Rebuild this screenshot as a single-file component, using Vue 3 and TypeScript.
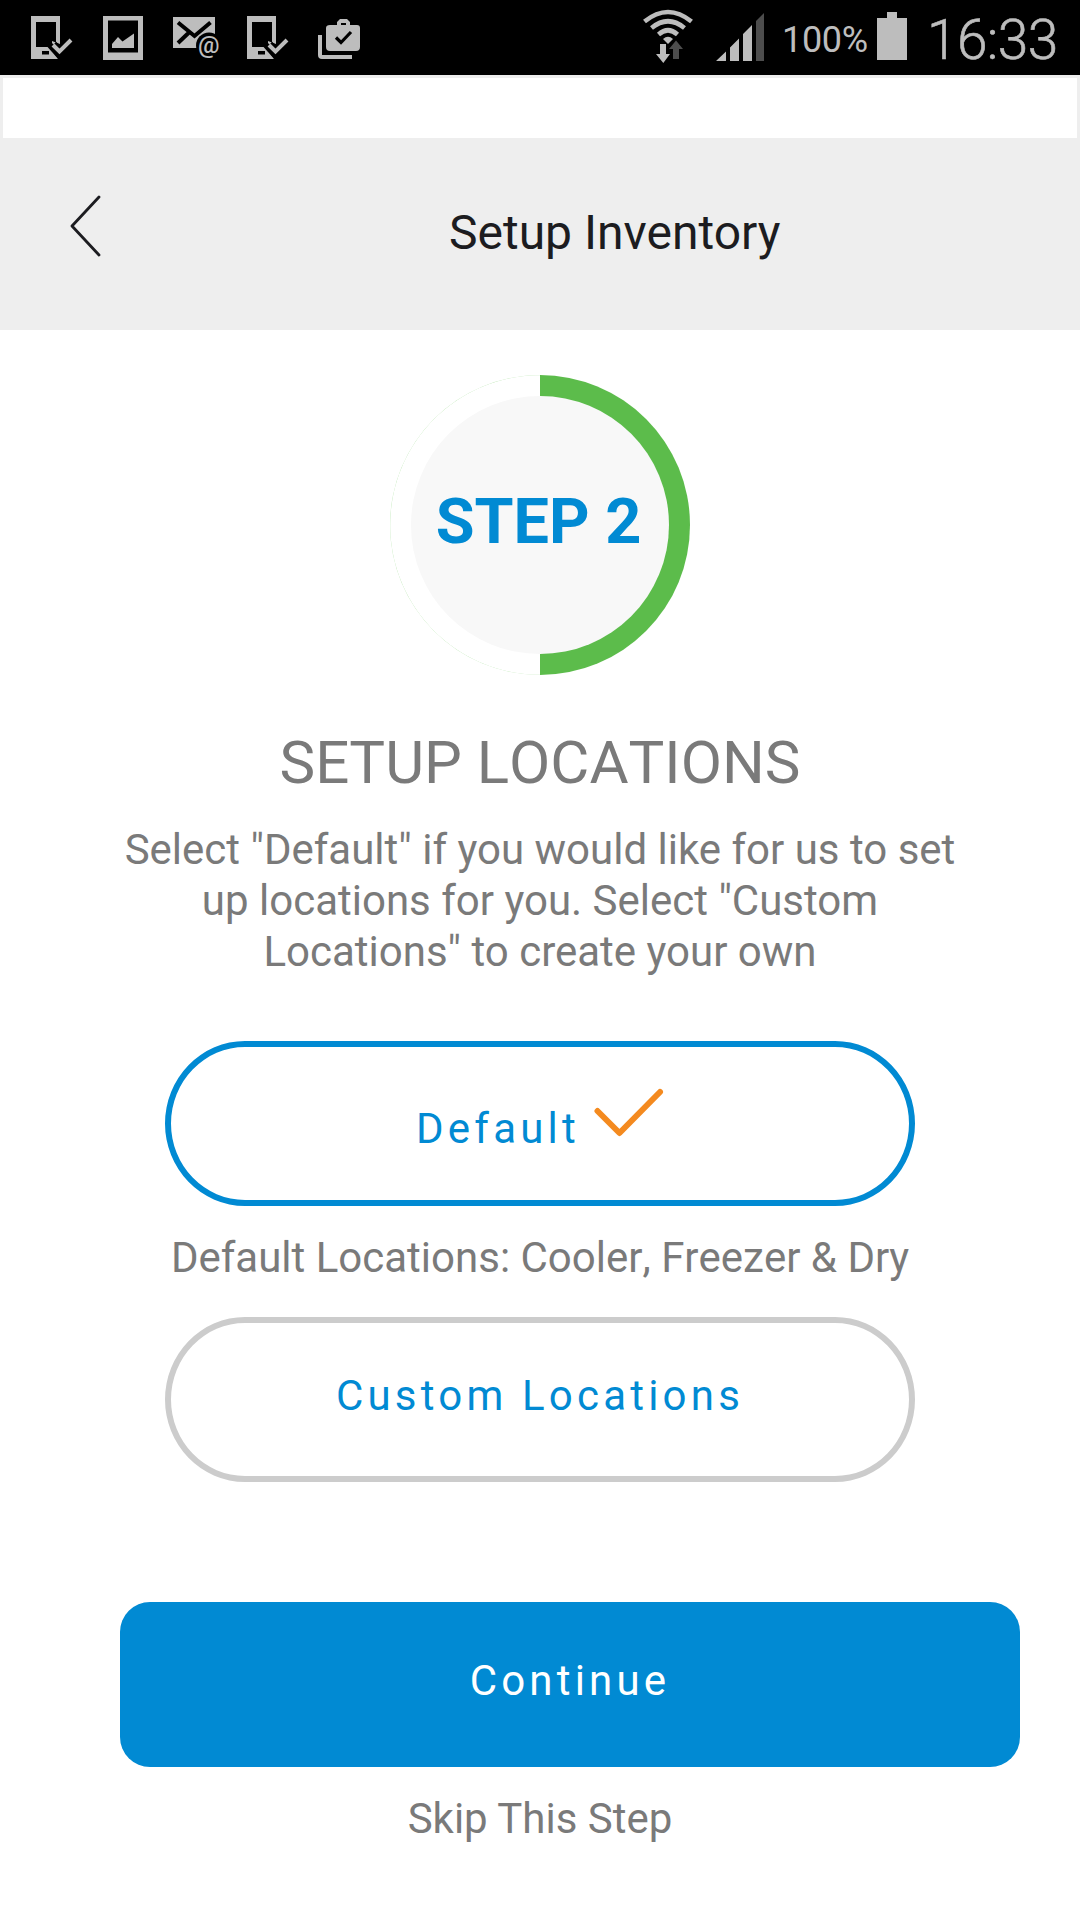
<script setup lang="ts">
interface Icon {
  name: 'device' | 'image' | 'mail' | 'work'
  width: number
}

const notifications: Icon[] = [
  { name: 'device', width: 44 },
  { name: 'image', width: 40 },
  { name: 'mail', width: 48 },
  { name: 'device', width: 44 },
  { name: 'work', width: 44 },
]
</script>

<template>
  <div class="screen">
    <div class="status">
      <div class="notifications">
        <svg
          v-for="(icon, i) in notifications"
          :key="i"
          :width="icon.width"
          height="75"
          :viewBox="`0 0 ${icon.width} 75`"
          fill="#bdbdbd"
        >
          <template v-if="icon.name === 'device'">
            <path fill-rule="evenodd" d="M0 16H29V44L21 41V47H19L27 59H0ZM5 22V47H25V22ZM11 51V54.5H18V51Z" />
            <path d="M17 43L29 56.500" fill="none" stroke="#000" stroke-width="6" />
            <path d="M22 45L28.500 51.500L40 40" fill="none" stroke="#000" stroke-width="9" />
            <path d="M22 45L28.500 51.500L40 40" fill="none" stroke="#bdbdbd" stroke-width="4" />
          </template>
          <template v-else-if="icon.name === 'image'">
            <path fill-rule="evenodd" d="M0 16H40V60H0ZM5 20.500V52.500H35V20.500Z" />
            <path d="M9 48V44L15 37L19.500 41.500L31 33.500V48Z" />
          </template>
          <template v-else-if="icon.name === 'mail'">
            <path d="M0 17H42V48H0Z" />
            <path d="M5 22.500L21.500 36L37.500 22.500M5 43L16 32.500" fill="none" stroke="#000" stroke-width="4" />
            <circle cx="36" cy="45.500" r="13" fill="#000" />
            <text x="25" y="53" class="at" textLength="21.500" lengthAdjust="spacingAndGlyphs">@</text>
          </template>
          <template v-else>
            <path d="M0 35H4V55H34V59H4Q0 59 0 55Z" />
            <path
              fill-rule="evenodd"
              d="M12 25H19V22L22 19H29L32 22V25H39Q42 25 42 28V47Q42 51 38 51H12Q8 51 8 47V28Q8 25 12 25ZM23 23V25H28V23Z"
            />
            <path d="M18 37.500L23 42.500L33 32" fill="none" stroke="#000" stroke-width="3.200" />
          </template>
        </svg>
      </div>
      <div class="system">
        <svg class="wifi" width="50" height="75" viewBox="643 0 50 75" fill="none" stroke="#bdbdbd" stroke-width="4.600">
          <path d="M644.500 21.500Q668 2.500 691.500 21.500M651.500 28Q668 14.500 684.500 28M658.500 34.500Q668 26 677.500 34.500" />
          <path d="M663 39Q668 34.500 673 39L668 44Z" fill="#bdbdbd" stroke="none" />
          <path d="M660 44H666V54H670L663.300 63L656 54H660Z" fill="#bdbdbd" stroke="none" />
          <path d="M673 59V49H669L676 40.500L683 49H679V59Z" fill="#4d4d4d" stroke="none" />
        </svg>
        <svg class="signal" width="48" height="75" viewBox="716 0 48 75" fill="#bdbdbd">
          <path d="M716 61L726 51.500V61ZM730 61V47.500L739 38.500V61ZM743 61V34L752 25V61Z" />
          <path d="M756 61V21L764 13V61Z" fill="#4d4d4d" />
        </svg>
        <span class="percent">100%</span>
        <svg class="battery" width="30" height="75" viewBox="877 0 30 75" fill="#bdbdbd">
          <path d="M877 18H887V12H897V18H907V60H877Z" />
        </svg>
        <span class="clock">16:33</span>
      </div>
    </div>

    <div class="strip"></div>

    <header class="header">
      <svg class="back" width="40" height="70" viewBox="65 190 40 70">
        <path d="M99 197L72 226L99 255" fill="none" stroke="#1c1c20" stroke-width="2.800" stroke-linecap="round" stroke-linejoin="round" />
      </svg>
      <h1>Setup Inventory</h1>
    </header>

    <main>
      <div class="ring">
        <div class="disc">STEP 2</div>
      </div>
      <h2>SETUP LOCATIONS</h2>
      <p class="intro">
        Select "Default" if you would like for us to set<br />
        up locations for you. Select "Custom<br />
        Locations" to create your own
      </p>

      <button class="pill selected" type="button">
        <span>Default</span>
        <svg width="70" height="50" viewBox="594 1088 70 50">
          <path d="M597.500 1111L619.500 1133L660 1092" fill="none" stroke="#f48a1f" stroke-width="6" stroke-linecap="round" stroke-linejoin="round" />
        </svg>
      </button>
      <p class="note">Default Locations: Cooler, Freezer &amp; Dry</p>
      <button class="pill custom" type="button">Custom Locations</button>

      <button class="continue" type="button">Continue</button>
      <a class="skip">Skip This Step</a>
    </main>
  </div>
</template>

<style>
body {
  margin: 0;
  background: #fff;
}
</style>

<style scoped>
.screen {
  width: 1080px;
  height: 1920px;
  overflow: hidden;
  background: #fff;
  font-family: Roboto, sans-serif;
  color: #7a7a7a;
}
svg {
  display: block;
  flex: none;
}
.status {
  display: flex;
  justify-content: space-between;
  height: 75px;
  background: #000;
  color: #bdbdbd;
}
.notifications {
  display: flex;
  padding-left: 31px;
}
.notifications svg:nth-child(2) { margin-left: 28px; }
.notifications svg:nth-child(3) { margin-left: 30px; }
.notifications svg:nth-child(4) { margin-left: 26px; }
.notifications svg:nth-child(5) { margin-left: 27px; }
.at {
  font: 500 24px Roboto, sans-serif;
}
.system {
  display: flex;
  width: 437px;
  white-space: nowrap;
}
.signal {
  margin-left: 23px;
}
.percent {
  width: 95px;
  margin-left: 18px;
  font-size: 36px;
  letter-spacing: -0.3px;
  line-height: 80px;
}
.clock {
  margin-left: 20px;
  font-size: 55px;
  font-weight: 300;
  letter-spacing: -0.6px;
  line-height: 81px;
  -webkit-text-stroke: 0.6px #bdbdbd;
}
.strip {
  box-sizing: border-box;
  height: 63px;
  border: 3px solid #eee;
  border-bottom: 0;
}
.header {
  display: flex;
  height: 192px;
  background: #eee;
}
.back {
  margin: 52px 0 0 65px;
}
h1 {
  margin: 65px 0 0 344px;
  font-size: 48px;
  font-weight: 400;
  line-height: 60px;
  color: #1c1c20;
  white-space: nowrap;
}
main {
  display: flex;
  flex-direction: column;
  align-items: center;
  padding-top: 45px;
}
.ring {
  display: flex;
  box-sizing: border-box;
  width: 300px;
  height: 300px;
  padding: 21px;
  border-radius: 50%;
  background:
    linear-gradient(#5cbc4b, #5cbc4b) right / 150px 100% no-repeat,
    radial-gradient(circle at center, #fff 149.300px, #c9ecc2 150px);
}
.disc {
  box-sizing: border-box;
  width: 258px;
  height: 258px;
  padding-right: 3px;
  border-radius: 50%;
  background: #f8f8f8;
  color: #018ad3;
  font-size: 63px;
  font-weight: 700;
  line-height: 251px;
  text-align: center;
  white-space: nowrap;
}
h2 {
  margin: 52px 0 0;
  font-size: 60px;
  font-weight: 400;
  font-kerning: none;
  line-height: 72px;
}
p {
  margin: 0;
  font-size: 42px;
  line-height: 51px;
  text-align: center;
  white-space: nowrap;
}
.intro {
  margin-top: 25px;
}
button {
  box-sizing: border-box;
  padding: 0;
  font: 400 42px/51px Roboto, sans-serif;
  letter-spacing: 4.2px;
}
.pill {
  display: flex;
  justify-content: center;
  width: 750px;
  height: 165px;
  border: 6px solid #ccc;
  border-radius: 80px / 82.500px;
  background: #fff;
  color: #018ad3;
}
.selected {
  margin-top: 64px;
  border-color: #018ad3;
}
.selected span {
  margin-top: 56px;
}
.selected svg {
  margin: 41px 0 0 14px;
}
.note {
  margin-top: 26px;
  font-kerning: none;
}
.custom {
  margin-top: 34px;
  padding-top: 47px;
}
.continue {
  width: 900px;
  height: 165px;
  margin: 120px 0 0 60px;
  padding-bottom: 8px;
  border: 0;
  border-radius: 30px;
  background: #018ad3;
  color: #fff;
}
.skip {
  margin-top: 26px;
  font-size: 42px;
  line-height: 51px;
}
</style>
